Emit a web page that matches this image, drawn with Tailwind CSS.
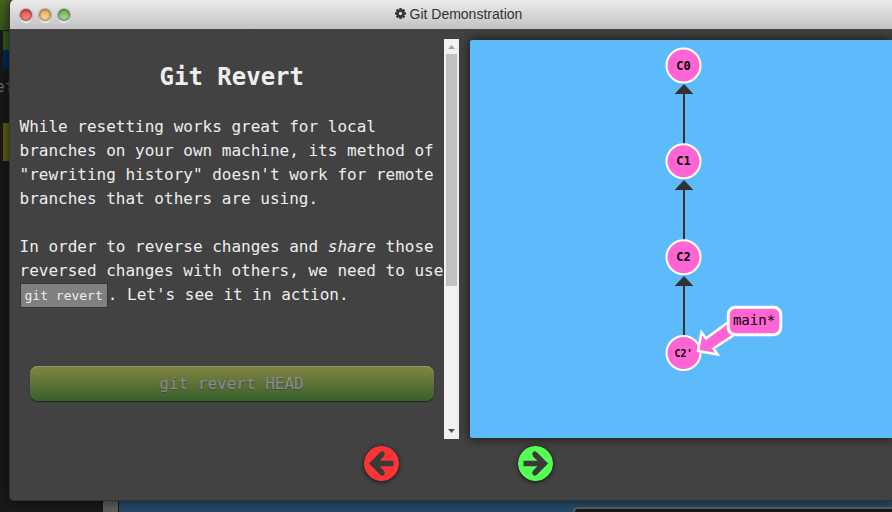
<!DOCTYPE html>
<html lang="en">
<head>
<meta charset="utf-8">
<title>Git Demonstration</title>
<script src="https://cdn.jsdelivr.net/npm/@tailwindcss/browser@4"></script>
</head>
<body class="relative h-[512px] w-[892px] overflow-hidden bg-[#191919] font-['DejaVu_Sans_Mono',monospace]">
  <!-- terminal and canvas behind the dialog -->
  <div class="flex h-[512px]">
    <div class="flex w-[103px] flex-col">
      <div class="h-[30px] w-5 shrink-0 bg-gradient-to-b from-[#48651d] to-[#38551b]"></div>
      <div class="mt-px ml-[3px] h-[19px] w-5 shrink-0 bg-[#34581e]"></div>
      <div class="ml-[3px] h-[19px] w-5 shrink-0 bg-[#002b55]"></div>
      <div class="-ml-[5px] mt-[6px] h-6 shrink-0 text-base leading-6 text-[#6c6c6c]">e<span class="text-[#4a6480]">f</span></div>
      <div class="mt-[24px] ml-[3px] h-[38px] w-5 shrink-0 bg-[#5e5d10]"></div>
    </div>
    <div class="w-[15px] bg-[#5d5d5d]"></div>
    <div class="ml-px flex flex-1 flex-col justify-end bg-[#254b69]">
      <div class="ml-[454px] h-[5px] rounded-tl-[5px] border-t-2 border-l-2 border-[#5d5d5d] bg-[#191919]"></div>
    </div>
  </div>

  <main class="absolute top-0 right-0 left-[9px] flex h-[501px] flex-col overflow-hidden rounded-l-[5px] border border-t-0 border-r-0 border-[#333] bg-[#424242] shadow-[0_0_12px_rgba(0,0,0,0.65)]">
    <header class="flex h-[29px] shrink-0 items-center bg-gradient-to-b from-[#ebebeb] to-[#c3c3c3] font-['Liberation_Sans',sans-serif]">
      <div class="ml-[10px] flex gap-[7px]">
        <span class="h-3 w-3 rounded-full bg-gradient-to-b from-[#df3f43] to-[#ff9292] shadow-[inset_0_0_2px_1px_rgba(0,0,0,0.4),0_0_1px_1px_rgba(80,80,80,0.3),0_2px_1px_#fff]"></span>
        <span class="h-3 w-3 rounded-full bg-gradient-to-b from-[#e8a550] to-[#ffdf9c] shadow-[inset_0_0_2px_1px_rgba(0,0,0,0.4),0_0_1px_1px_rgba(80,80,80,0.3),0_2px_1px_#fff]"></span>
        <span class="h-3 w-3 rounded-full bg-gradient-to-b from-[#62ad50] to-[#b1e3a2] shadow-[inset_0_0_2px_1px_rgba(0,0,0,0.4),0_0_1px_1px_rgba(80,80,80,0.3),0_2px_1px_#fff]"></span>
      </div>
      <div class="-mt-[2px] ml-[324.5px] flex items-center text-sm leading-5 text-[#333]">
        <svg class="mr-[4px] h-[11px] w-[11px]" viewBox="-6 -6 12 12"><g fill="#333"><rect x="-1.3" y="-6" width="2.6" height="12"/><rect x="-1.3" y="-6" width="2.6" height="12" transform="rotate(45)"/><rect x="-1.3" y="-6" width="2.6" height="12" transform="rotate(90)"/><rect x="-1.3" y="-6" width="2.6" height="12" transform="rotate(135)"/></g><circle r="3.3" fill="none" stroke="#333" stroke-width="2.6"/><circle r="1.8" fill="#d8d8d8"/></svg>
        <h1>Git Demonstration</h1>
      </div>
    </header>

    <div class="flex h-[410px] shrink-0 pt-[10px]">
      <article class="w-[434px] shrink-0 pl-[9.5px] text-base leading-6 whitespace-nowrap text-[#eee]">
        <h2 class="mt-[23px] text-center text-2xl leading-[30px] font-bold">Git Revert</h2>
        <p class="mt-[23px]">While resetting works great for local<br>branches on your own machine, its method of<br>"rewriting history" doesn't work for remote<br>branches that others are using.</p>
        <p class="mt-6 h-[72px]">In order to reverse changes and <em>share</em> those<br>reversed changes with others, we need to use<br><code class="border border-[#333] bg-[#808080] px-[4px] py-[4px] font-['DejaVu_Sans_Mono',monospace] text-[13px]">git revert</code>. Let's see it in action.</p>
        <div class="mt-[59px] mr-[10px] ml-[10.5px] h-[35px] rounded-lg bg-gradient-to-b from-[#838543] to-[#34602b] pr-px text-center leading-[35px] text-[#8c8c8c] shadow-[0_1px_1px_#222,inset_0_1px_0_#929466] text-shadow-[0_1px_1px_#444]">git revert HEAD</div>
      </article>
      <div class="flex h-[400px] w-[15px] shrink-0 flex-col items-center bg-[#f1f1f1]">
        <svg class="h-[15px] w-[15px]" viewBox="0 0 15 15"><path d="M4 10L7.5 6L11 10Z" fill="#a3a3a3"/></svg>
        <div class="h-[232px] w-[11px] bg-[#c1c1c1]"></div>
        <svg class="mt-auto h-[15px] w-[15px]" viewBox="0 0 15 15"><path d="M4 5L11 5L7.5 9Z" fill="#505050"/></svg>
      </div>
      <div class="mt-px ml-[11px] h-[398px] flex-1 rounded-l-[2px] bg-[#5dbbfc] shadow-[0_0_12px_rgba(0,0,0,0.75)]">
        <!-- commit graph -->
        <svg class="h-[398px] w-[422px]" viewBox="470 40 422 398">
          <g stroke="#333" stroke-width="2"><path d="M684 144V92M684 240V188M684 336V284"/></g>
          <g fill="#333" stroke="#333" stroke-width="1" stroke-linejoin="round"><path d="M684 84.5L692.5 93.5H675.5ZM684 180.5L692.5 189.5H675.5ZM684 276.5L692.5 285.5H675.5Z"/></g>
          <g fill="#ff65d4" stroke="#fff" stroke-width="2"><circle cx="683.5" cy="65.5" r="17"/><circle cx="683.5" cy="161.3" r="17"/><circle cx="683.5" cy="257.2" r="17"/><circle cx="683.5" cy="353" r="17"/></g>
          <path d="M698 351L701.5 332.5L706 338.5L738 315L746 327L713.5 348.5L717.5 354.5Z" fill="#ff65d4" stroke="#fff" stroke-width="2.6"/>
          <rect x="728.3" y="307.3" width="52.4" height="27.4" rx="7" fill="#ff65d4" stroke="#fff" stroke-width="3"/>
          <g text-anchor="middle" fill="#000" font-family="DejaVu Sans Mono, monospace">
            <g font-size="12" font-weight="700"><text x="683.5" y="70">C0</text><text x="683.5" y="165">C1</text><text x="683.5" y="261">C2</text><text x="683.5" y="357" font-size="10">C2'</text></g>
            <text x="754" y="325" font-size="14">main*</text>
          </g>
        </svg>
      </div>
    </div>
    <nav class="mt-[7px] ml-[354px] flex gap-[119px]">
      <svg class="h-[35px] w-[35px] rounded-full shadow-[0_1px_4px_rgba(0,0,0,0.7)]" viewBox="0 0 35 35"><circle cx="17.5" cy="17.5" r="17.5" fill="#f33"/><path d="M29.5 17.5H9M18.3 8L8.8 17.5L18.3 27" fill="none" stroke="#3a3a3a" stroke-width="5.4"/><path d="M18.3 8L9 17.5L18.3 27" fill="none" stroke="#3a3a3a" stroke-width="5" stroke-linecap="round"/></svg>
      <svg class="h-[35px] w-[35px] rounded-full shadow-[0_1px_4px_rgba(0,0,0,0.7)]" viewBox="0 0 35 35"><circle cx="17.5" cy="17.5" r="17.5" fill="#5f5"/><path d="M5.5 17.5H26M16.7 8L26.2 17.5L16.7 27" fill="none" stroke="#3a3a3a" stroke-width="5.4"/><path d="M16.7 8L26 17.5L16.7 27" fill="none" stroke="#3a3a3a" stroke-width="5" stroke-linecap="round"/></svg>
    </nav>
  </main>
</body>
</html>
